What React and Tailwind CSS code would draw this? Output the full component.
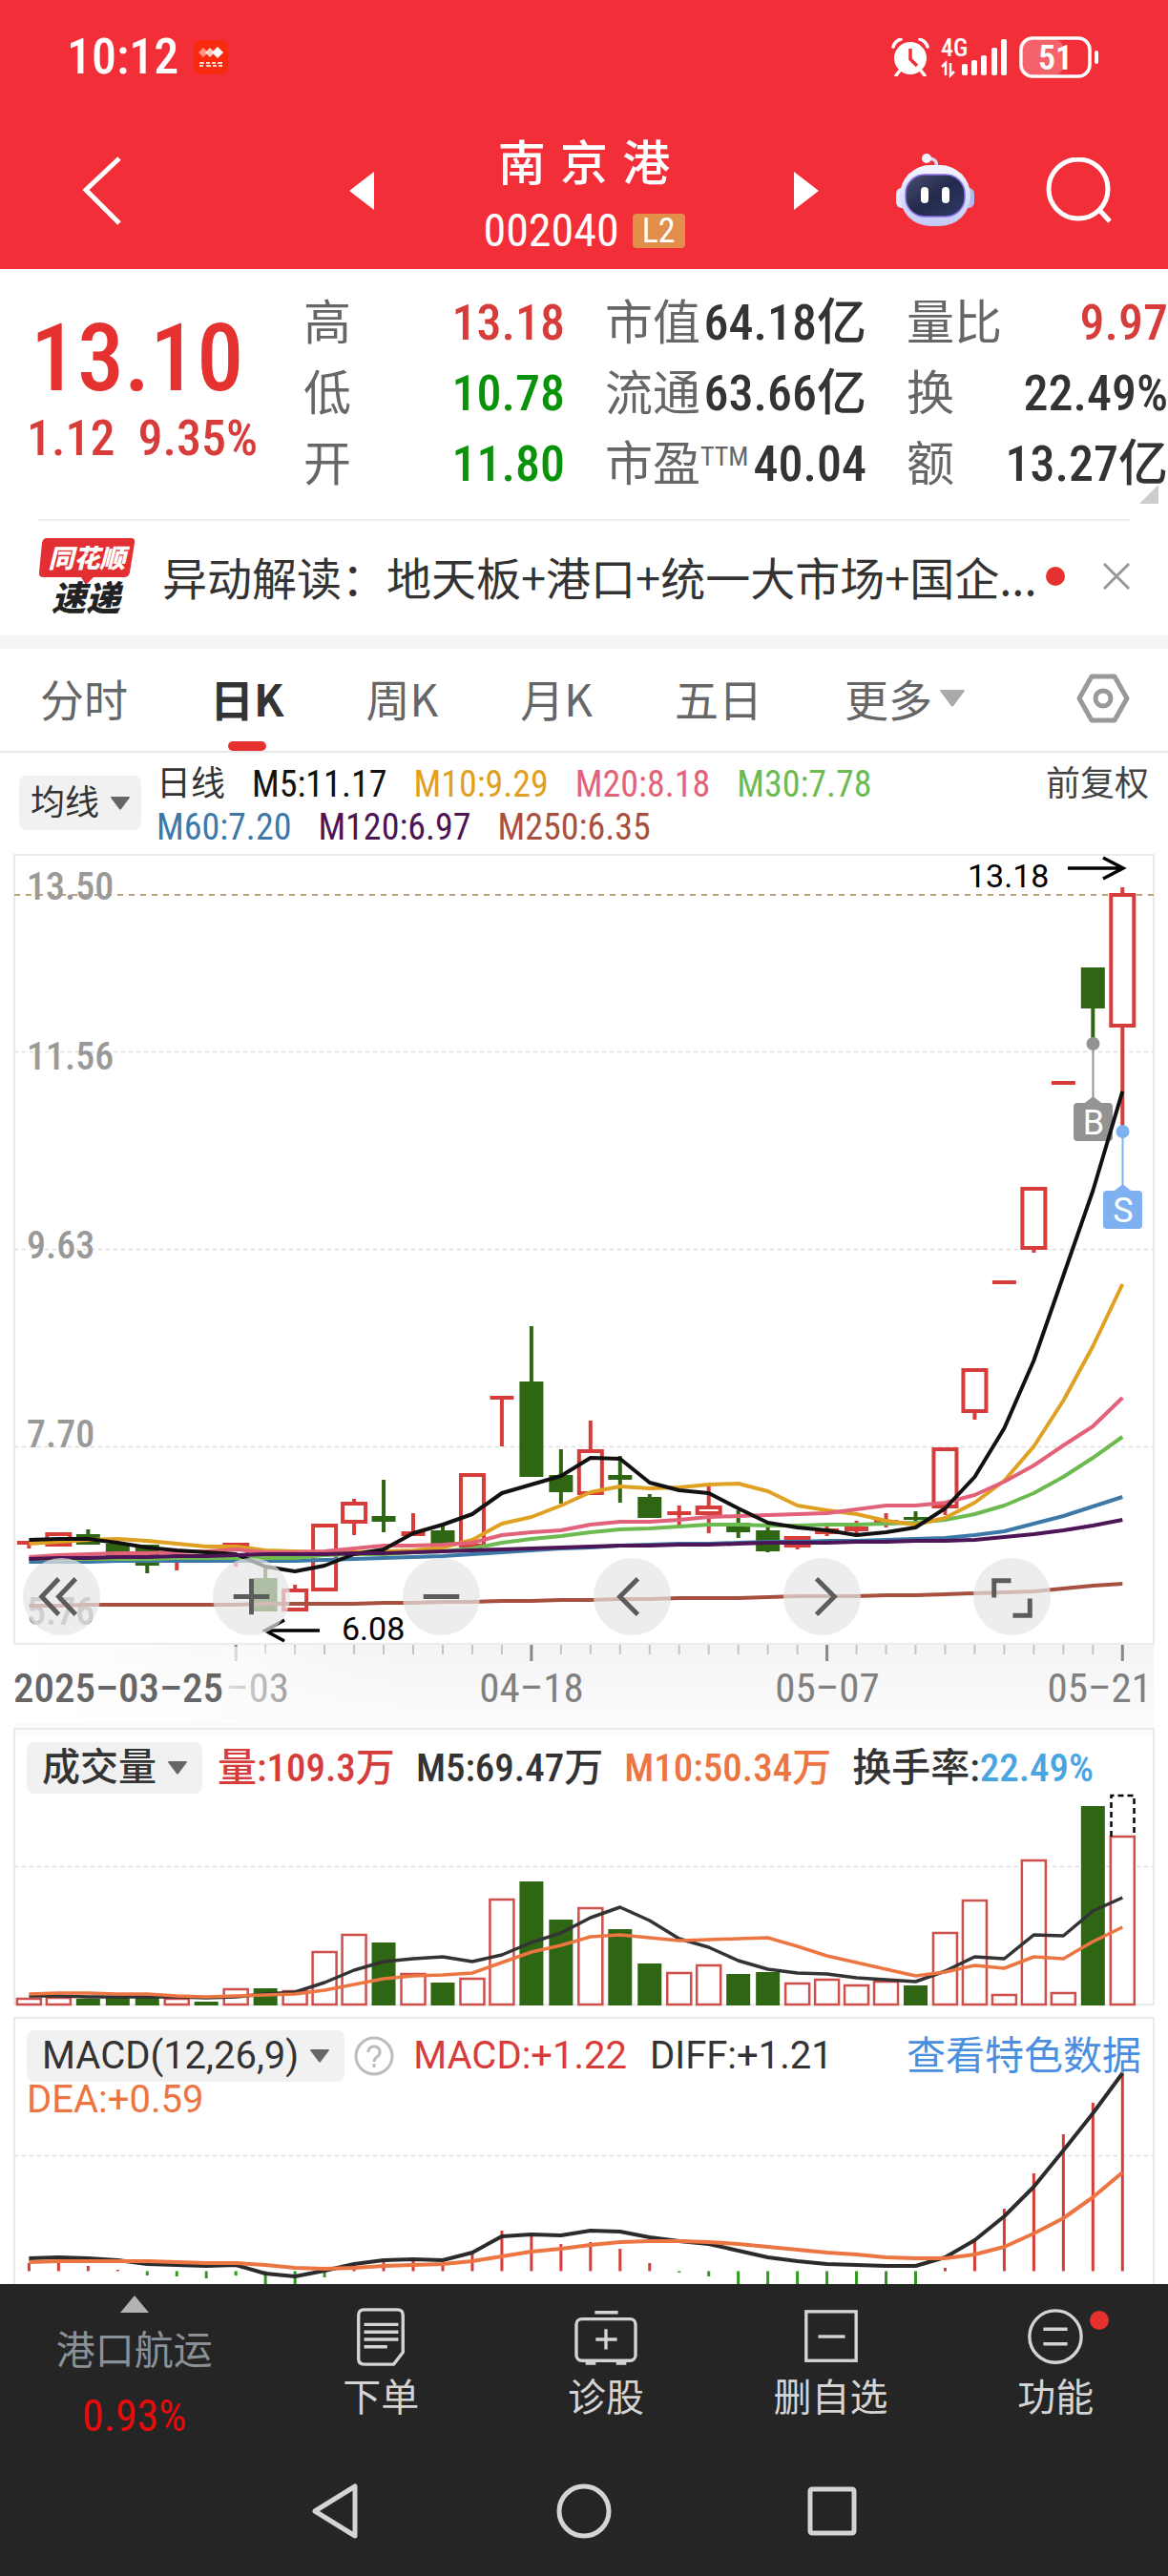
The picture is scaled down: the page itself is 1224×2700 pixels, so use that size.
import React, { useState } from 'react';

const RED = '#d63c3a';
const GREEN = '#2f6613';

// horizontal position of day i (38 trading days)
const dayX = (i) => 30.4 + i * 30.97;

// [direction, top of body, bottom of body, high, low]
const candles = [
    ['doji', 1615, 1619, 1615, 1623],
    ['up', 1606, 1621, 1606, 1621],
    ['down', 1608, 1619, 1603, 1619],
    ['down', 1618, 1632, 1618, 1635],
    ['down', 1619, 1641, 1619, 1649],
    ['doji', 1631, 1634, 1628, 1646],
    ['down', 1633, 1636, 1630, 1637],
    ['up', 1617, 1634, 1617, 1642],
    ['down', 1654, 1689, 1640, 1689],
    ['up', 1665, 1689, 1661, 1689],
    ['up', 1597, 1668, 1597, 1668],
    ['up', 1574, 1597, 1571, 1609],
    ['down', 1589, 1595, 1551, 1606],
    ['doji', 1605, 1610, 1586, 1610],
    ['down', 1604, 1618, 1599, 1618],
    ['up', 1544, 1622, 1544, 1622],
    ['doji', 1463, 1467, 1463, 1516],
    ['down', 1448, 1548, 1390, 1548],
    ['down', 1546, 1564, 1519, 1576],
    ['up', 1519, 1567, 1489, 1567],
    ['down', 1546, 1551, 1526, 1575],
    ['down', 1569, 1591, 1566, 1591],
    ['doji', 1584, 1588, 1578, 1599],
    ['up', 1578, 1588, 1557, 1607],
    ['down', 1596, 1606, 1583, 1612],
    ['down', 1604, 1626, 1600, 1627],
    ['up', 1610, 1622, 1610, 1624],
    ['doji', 1602, 1608, 1600, 1610],
    ['doji', 1600, 1605, 1594, 1611],
    ['doji', 1593, 1596, 1586, 1601],
    ['down', 1590, 1593, 1584, 1597],
    ['up', 1517, 1581, 1517, 1588],
    ['up', 1434, 1481, 1434, 1488],
    ['doji', 1342, 1346, 1342, 1346],
    ['up', 1244, 1310, 1244, 1313],
    ['doji', 1133, 1137, 1133, 1137],
    ['down', 1014, 1057, 1014, 1094],
    ['up', 936, 1077, 930, 1186],
];

const dayTicks = candles.map((_, i) => i).filter((i) => i >= 7);

const averages = [
    { color: '#a8503f', data: [1683, 1683, 1682, 1682, 1682, 1682, 1682, 1682, 1681, 1681, 1681, 1681, 1680, 1680, 1679, 1679, 1678, 1678, 1677, 1677, 1676, 1676, 1675, 1675, 1675, 1674, 1673, 1673, 1673, 1672, 1672, 1671, 1670, 1669, 1668, 1665, 1662, 1660] },
    { color: '#3c78a8', data: [1637, 1637, 1637, 1636, 1636, 1636, 1636, 1636, 1636, 1636, 1635, 1634, 1633, 1632, 1631, 1629, 1627, 1625, 1623, 1622, 1620, 1619, 1618, 1618, 1617, 1616, 1616, 1615, 1615, 1614, 1613, 1612, 1609, 1605, 1597, 1589, 1579, 1569] },
    { color: '#6dbb50', data: [1634, 1634, 1634, 1634, 1634, 1633, 1633, 1633, 1633, 1633, 1630, 1629, 1629, 1627, 1626, 1623, 1617, 1613, 1610, 1606, 1603, 1602, 1600, 1598, 1598, 1599, 1599, 1598, 1598, 1597, 1596, 1593, 1587, 1578, 1565, 1548, 1528, 1506] },
    { color: '#e0a022', data: [1618, 1616, 1614, 1613, 1615, 1618, 1621, 1621, 1625, 1626, 1627, 1627, 1626, 1625, 1622, 1614, 1597, 1590, 1578, 1564, 1558, 1560, 1559, 1556, 1555, 1563, 1578, 1583, 1587, 1594, 1598, 1591, 1575, 1552, 1516, 1468, 1411, 1346] },
    { color: '#e2627a', data: [1632, 1630, 1629, 1628, 1628, 1627, 1626, 1624, 1627, 1627, 1626, 1623, 1620, 1620, 1619, 1617, 1609, 1606, 1604, 1598, 1595, 1595, 1593, 1590, 1589, 1588, 1587, 1586, 1582, 1578, 1578, 1575, 1567, 1553, 1536, 1515, 1495, 1465] },
    { color: '#111111', data: [1614, 1613, 1613, 1617, 1622, 1625, 1627, 1629, 1642, 1647, 1641, 1629, 1624, 1607, 1598, 1587, 1565, 1556, 1547, 1528, 1529, 1554, 1562, 1565, 1581, 1596, 1601, 1604, 1609, 1606, 1601, 1581, 1548, 1497, 1426, 1337, 1248, 1144] },
    { color: '#4c1656', data: [1634, 1633, 1633, 1632, 1632, 1631, 1631, 1630, 1629, 1629, 1629, 1628, 1628, 1627, 1626, 1625, 1624, 1623, 1622, 1621, 1620, 1620, 1619, 1619, 1618, 1617, 1617, 1617, 1616, 1616, 1615, 1615, 1614, 1611, 1608, 1604, 1599, 1593] },
];

const volumeTops = [2095, 2094, 2095, 2094, 2094, 2095, 2098, 2085, 2084, 2087, 2046, 2028, 2036, 2069, 2078, 2074, 1991, 1972, 2012, 2000, 2022, 2058, 2068, 2060, 2069, 2067, 2079, 2075, 2081, 2077, 2081, 2026, 1992, 2091, 1950, 2089, 1893, 1925];
const volumeM5 = [2092, 2092, 2093, 2093, 2093, 2093, 2094, 2093, 2090, 2088, 2078, 2065, 2056, 2053, 2051, 2056, 2049, 2036, 2026, 2010, 1999, 2013, 2032, 2041, 2055, 2064, 2068, 2069, 2073, 2075, 2077, 2066, 2051, 2053, 2028, 2029, 2003, 1989];
const volumeM10 = [2090, 2089, 2089, 2090, 2090, 2092, 2093, 2092, 2091, 2090, 2086, 2080, 2074, 2071, 2070, 2068, 2057, 2046, 2039, 2030, 2028, 2031, 2034, 2033, 2032, 2031, 2040, 2050, 2057, 2064, 2071, 2067, 2060, 2063, 2051, 2053, 2035, 2020];

const macdBars = [2372, 2372, 2375, 2379, 2385, 2386, 2388, 2385, 2400, 2400, 2387, 2374, 2370, 2369, 2373, 2362, 2338, 2344, 2352, 2350, 2357, 2372, 2382, 2386, 2400, 2400, 2400, 2400, 2400, 2400, 2400, 2377, 2349, 2315, 2278, 2237, 2204, 2173];
const macdDiff = [2367, 2366, 2367, 2369, 2373, 2374, 2375, 2374, 2383, 2386, 2380, 2373, 2369, 2368, 2369, 2361, 2344, 2342, 2343, 2338, 2339, 2345, 2349, 2352, 2359, 2366, 2370, 2373, 2374, 2375, 2375, 2366, 2348, 2323, 2292, 2254, 2215, 2173];
const macdDea = [2371, 2370, 2370, 2370, 2370, 2371, 2372, 2372, 2374, 2377, 2378, 2377, 2375, 2374, 2373, 2370, 2365, 2360, 2357, 2353, 2350, 2349, 2349, 2350, 2352, 2355, 2358, 2361, 2363, 2366, 2367, 2367, 2363, 2355, 2341, 2325, 2303, 2277];

const legend = [
    { text: 'M5:11.17', className: 'text-[#111111]' },
    { text: 'M10:9.29', className: 'text-[#e0a022]' },
    { text: 'M20:8.18', className: 'text-[#e2627a]' },
    { text: 'M30:7.78', className: 'text-[#6dbb50]' },
    { text: 'M60:7.20', className: 'text-[#3c78a8]' },
    { text: 'M120:6.97', className: 'text-[#4c1656]' },
    { text: 'M250:6.35', className: 'text-[#a8503f]' },
];

const quotes = [
    [
        { label: '高', value: '13.18', className: 'text-[#d63c3a]' },
        { label: '低', value: '10.78', className: 'text-[#0a930a]' },
        { label: '开', value: '11.80', className: 'text-[#0a930a]' },
    ],
    [
        { label: '市值', value: '64.18亿', className: 'text-[#333333]' },
        { label: '流通', value: '63.66亿', className: 'text-[#333333]' },
        { label: '市盈', sup: 'TTM', value: '40.04', className: 'text-[#333333]' },
    ],
    [
        { label: '量比', value: '9.97', className: 'text-[#d63c3a]' },
        { label: '换', value: '22.49%', className: 'text-[#333333]' },
        { label: '额', value: '13.27亿', className: 'text-[#333333]' },
    ],
];

const Line = ({ data, color, width = 4 }) => (
    <polyline
        points={data.map((y, i) => `${dayX(i)},${y}`).join(' ')}
        fill="none"
        stroke={color}
        strokeWidth={width}
        strokeLinejoin="round"
    />
);

const Grid = ({ y }) => (
    <line x1="15" x2="1209" y1={y} y2={y} stroke="#dedede" strokeWidth="1.5" strokeDasharray="4 4" />
);

const Candle = ({ x, candle }) => {
    const [kind, top, bottom, high, low] = candle;
    const color = kind === 'down' ? GREEN : RED;
    return (
        <g stroke={color} strokeWidth="4">
            {high < top && <line x1={x} x2={x} y1={high} y2={top} />}
            {low > bottom && <line x1={x} x2={x} y1={bottom} y2={low} />}
            {kind === 'up' ? (
                <rect x={x - 12} y={top + 2} width="24" height={bottom - top - 4} fill="none" />
            ) : (
                <rect x={x - 12.5} y={top} width="25" height={bottom - top} fill={color} stroke="none" />
            )}
        </g>
    );
};

const Caret = ({ className }) => (
    <svg className={className} viewBox="0 0 20 14" aria-hidden="true">
        <path d="M1 0h18q1.500 0 .6 1.500L11 13q-1 1.200-2 0L.4 1.500Q-.5 0 1 0z" fill="currentColor" />
    </svg>
);

const Dropdown = ({ id, label, value, className }) => (
    <label htmlFor={id} className={`flex shrink-0 items-center rounded-lg bg-[#f1f1f1] text-[#333333] ${className}`}>
        <select id={id} aria-label={label} defaultValue={value} className="field-sizing-content appearance-none bg-transparent outline-none">
            <option value={value}>{value}</option>
        </select>
        <Caret className="h-[14px] w-5 text-[#666666]" />
    </label>
);

const StatusBar = () => (
    <div className="flex items-center py-9 pl-[70px] pr-[72px] text-white">
        <span className="text-[52px] leading-[48px] font-medium">10:12</span>
        <svg className="ml-4 size-9" viewBox="0 0 36 36" aria-hidden="true">
            <rect width="36" height="36" rx="7" fill="#f92b0e" />
            <path d="M5 13l5-5 5 5-5 5z" fill="#fff" fillOpacity=".5" />
            <path d="M12 13l5-5 5 5-5 5z" fill="#fff" fillOpacity=".75" />
            <path d="M19 13l6-6 6 6-6 6z" fill="#fff" />
            <path d="M6 24h5m2 0h4m2 0h4m2 0h5M6 27h4m3 0h5m2 0h4m2 0h4" stroke="#fff" strokeWidth="2" strokeOpacity=".8" />
        </svg>
        <div className="ml-auto flex items-center">
            <svg className="h-10 w-10" viewBox="0 0 40 40" aria-hidden="true">
                <circle cx="20" cy="21" r="17" fill="#fff" />
                <path d="M2 9q2-6 8-8M38 9q-2-6-8-8M9 34l-4 5M31 34l4 5" stroke="#fff" strokeWidth="3.500" fill="none" strokeLinecap="round" />
                <path d="M20 11v11l7 7" stroke="#f22f38" strokeWidth="3.500" fill="none" />
            </svg>
            <svg className="ml-3 h-12 w-[72px]" viewBox="0 -4 72 48" aria-hidden="true">
                <text x="0" y="19" fontSize="26" fontWeight="500" fill="#fff">4G</text>
                <path d="M1 30l4-4v13M10 26v13l4-4" stroke="#fff" strokeWidth="2.500" fill="none" />
                <g fill="#fff">
                    <rect x="22" y="27" width="6" height="12" rx="2" />
                    <rect x="32" y="23" width="6" height="16" rx="2" />
                    <rect x="42" y="18" width="6" height="21" rx="2" />
                    <rect x="53" y="10" width="6" height="29" rx="2" />
                    <rect x="63" y="1" width="6" height="38" rx="2" />
                </g>
            </svg>
            <svg className="ml-2.5 h-11 w-[84px]" viewBox="0 0 84 44" aria-hidden="true">
                <rect x="4" y="4" width="42" height="36" rx="8" fill="#fff" fillOpacity=".25" />
                <rect x="2" y="2" width="72" height="40" rx="12" fill="none" stroke="#fff" strokeWidth="3.500" />
                <rect x="79" y="15" width="4" height="14" rx="2" fill="#fff" />
                <text x="38" y="35" fontSize="36" fontWeight="600" fill="#fff" textAnchor="middle">51</text>
            </svg>
        </div>
    </div>
);

const Robot = () => (
    <svg className="h-20 w-[84px]" viewBox="0 0 84 80" aria-hidden="true">
        <defs>
            <linearGradient id="shell" x1="0" y1="0" x2="0" y2="1">
                <stop offset="0" stopColor="#f4f6ff" />
                <stop offset="1" stopColor="#c3c9f6" />
            </linearGradient>
            <linearGradient id="face" x1="0" y1="0" x2="1" y2="1">
                <stop offset="0" stopColor="#4a4f70" />
                <stop offset=".5" stopColor="#232a4c" />
                <stop offset="1" stopColor="#303a66" />
            </linearGradient>
        </defs>
        <path d="M43 15q2-8-7-9" stroke="#d5d9fa" strokeWidth="3.500" fill="none" />
        <circle cx="33" cy="6" r="5" fill="#f1f3ff" />
        <rect x="1" y="37" width="14" height="21" rx="6" fill="#e3e6fc" />
        <rect x="69" y="37" width="14" height="21" rx="6" fill="#b4b9ee" />
        <rect x="5" y="13" width="74" height="64" rx="32" fill="url(#shell)" />
        <rect x="11" y="23" width="62" height="44" rx="20" fill="url(#face)" stroke="#8b6fe8" strokeWidth="1.500" />
        <rect x="27" y="36" width="8" height="17" rx="4" fill="#fff" />
        <rect x="49" y="36" width="8" height="17" rx="4" fill="#fff" />
    </svg>
);

const StockHeader = () => (
    <header className="bg-[#f22f38] text-white">
        <StatusBar />
        <div className="grid grid-cols-[1fr_492px_1fr] items-center pt-5 pb-[22px]">
            <div className="pl-[84px]">
                <button type="button" aria-label="返回" className="block">
                    <svg className="h-[74px] w-11" viewBox="0 0 44 74" fill="none" stroke="currentColor" strokeWidth="5" aria-hidden="true">
                        <path d="M41 3L6 36l35 35" />
                    </svg>
                </button>
            </div>
            <div className="flex items-center justify-between">
                <button type="button" aria-label="上一只">
                    <svg className="h-10 w-[26px]" viewBox="0 0 26 40" aria-hidden="true">
                        <path d="M26 0v40L0 20z" fill="currentColor" />
                    </svg>
                </button>
                <div className="flex flex-col items-center">
                    <h1 className="pt-1 text-[50px] leading-[56px] font-medium">{'南\u2004京\u2004港'}</h1>
                    <p className="mt-6 flex items-center gap-[14px] text-[48px] leading-9">
                        002040
                        <span className="rounded-sm bg-[#e28f4b] px-2.5 text-[36px]">L2</span>
                    </p>
                </div>
                <button type="button" aria-label="下一只">
                    <svg className="h-10 w-[26px]" viewBox="0 0 26 40" aria-hidden="true">
                        <path d="M0 0v40l26-20z" fill="currentColor" />
                    </svg>
                </button>
            </div>
            <div className="flex items-center justify-end gap-[74px] pr-[58px]">
                <button type="button" aria-label="智能助手"><Robot /></button>
                <button type="button" aria-label="搜索">
                    <svg className="size-[70px]" viewBox="0 0 70 70" fill="none" stroke="currentColor" strokeWidth="5" aria-hidden="true">
                        <circle cx="34" cy="33" r="31" />
                        <path d="M56 55l11 12" />
                    </svg>
                </button>
            </div>
        </div>
    </header>
);

const Quote = () => (
    <section className="relative flex pt-5 pb-5">
        <div className="w-[318px] shrink-0 pt-6 text-[#e53130]">
            <p className="pl-8 text-[98px] leading-[100px] font-medium">13.10</p>
            <p className="mt-2 flex gap-6 pl-7 text-[52px] leading-[52px] font-medium text-[#d63c3a]">
                <span>1.12</span>
                <span>9.35%</span>
            </p>
        </div>
        <div className="grid flex-1 grid-cols-3 gap-[42px]">
            {quotes.map((column) => (
                <dl key={column[0].label}>
                    {column.map((row) => (
                        <div key={row.label} className="flex items-center justify-between leading-[74px] whitespace-nowrap">
                            <dt className="flex text-[50px] text-[#666666]">
                                {row.label}
                                {row.sup && <sup className="top-0 text-[28px] leading-[58px]">{row.sup}</sup>}
                            </dt>
                            <dd className={`text-[52px] font-medium ${row.className}`}>{row.value}</dd>
                        </div>
                    ))}
                </dl>
            ))}
        </div>
        <svg className="absolute right-2.5 bottom-4 size-5" viewBox="0 0 20 20" aria-hidden="true">
            <path d="M20 0v20H0z" fill="#cccccc" />
        </svg>
    </section>
);

const News = () => (
    <section className="mx-10 flex items-center border-t-2 border-[#ededed] pt-2.5 pb-[14px]">
        <svg className="h-24 w-[102px] shrink-0" viewBox="0 -8 102 96" aria-hidden="true">
            <path d="M9 0h88q5 0 4 5l-5 31q-1 5-6 5H58l-8 8-5-8H6q-6 0-5-5L4 5q1-5 5-5z" fill="#e22f33" />
            <g fontWeight="900" fontStyle="italic" textAnchor="middle">
                <text x="51" y="31" fontSize="27" fill="#fff">同花顺</text>
                <text x="50" y="76" fontSize="36" fill="#222">速递</text>
            </g>
        </svg>
        <a href="#news" className="ml-7 font-['Noto_Sans_CJK_SC',sans-serif] text-[47px] leading-[80px] whitespace-nowrap text-[#333333]">
            异动解读：地天板+港口+统一大市场+国企...
        </a>
        <span className="ml-2.5 size-5 shrink-0 rounded-full bg-[#e53130]" />
        <button type="button" aria-label="关闭" className="ml-auto">
            <svg className="size-7" viewBox="0 0 28 28" stroke="#999999" strokeWidth="3" aria-hidden="true">
                <path d="M1 1l26 26M27 1L1 27" />
            </svg>
        </button>
    </section>
);

const Tabs = () => {
    const [active, setActive] = useState('日K');

    return (
        <nav className="flex items-center gap-[86px] border-b-2 border-[#e8e8e8] pr-10 pb-1 pl-[42px] font-['Noto_Sans_CJK_SC',sans-serif] text-[46px] leading-[103px] text-[#666666]">
            {['分时', '日K', '周K', '月K', '五日'].map((tab) => (
                <button
                    key={tab}
                    type="button"
                    onClick={() => setActive(tab)}
                    className={`relative ${active === tab ? 'font-bold text-[#333333]' : ''}`}
                >
                    {tab}
                    {active === tab && (
                        <span className="absolute inset-x-0 -bottom-1 mx-auto h-2.5 w-10 rounded-full bg-[#e53130]" />
                    )}
                </button>
            ))}
            <button type="button" className="flex items-center gap-2">
                更多
                <Caret className="h-5 w-[26px] text-[#aaaaaa]" />
            </button>
            <button type="button" aria-label="设置" className="ml-auto">
                <svg className="h-[52px] w-14" viewBox="0 0 56 52" fill="none" stroke="#999999" strokeWidth="5" strokeLinejoin="round" aria-hidden="true">
                    <path d="M16 3h24l13 23-13 23H16L3 26z" />
                    <circle cx="28" cy="26" r="8" />
                </svg>
            </button>
        </nav>
    );
};

const Legend = () => (
    <div className="flex items-start px-5 pt-[11px]">
        <Dropdown id="indicator" label="主图指标" value="均线" className="mt-[13px] h-[57px] gap-3 px-3 text-[36px]" />
        <ul className="ml-4 flex flex-1 flex-wrap gap-x-7 pr-20 text-[38px] leading-[45px]">
            <li className="text-[36px] text-[#333333]">日线</li>
            {legend.map((item) => (
                <li key={item.text} className={item.className}>{item.text}</li>
            ))}
        </ul>
        <button type="button" className="text-[36px] leading-[45px] text-[#444444]">前复权</button>
    </div>
);

const chartButtons = [
    { label: '最早', path: 'M38 22L20 41l18 19M56 22L38 41l18 19' },
    { label: '放大', path: 'M22 41h38M41 22v38' },
    { label: '缩小', path: 'M22 41h38' },
    { label: '左移', path: 'M47 22L28 41l19 19' },
    { label: '右移', path: 'M35 22l19 19-19 19' },
    { label: '全屏', path: 'M22 42V24h18M60 43v18H42' },
];

const priceLabels = [
    { y: 943, text: '13.50' },
    { y: 1121, text: '11.56' },
    { y: 1319, text: '9.63' },
    { y: 1517, text: '7.70' },
    { y: 1703, text: '5.76' },
];

const PriceChart = () => (
    <section className="relative">
        <svg className="w-full" viewBox="0 890 1224 916" role="img" aria-label="日K线图">
            <defs>
                <linearGradient id="axisShade" x1="0" y1="0" x2="1" y2="0">
                    <stop offset="0" stopColor="#f4f4f4" stopOpacity="0" />
                    <stop offset=".35" stopColor="#f4f4f4" />
                </linearGradient>
                <linearGradient id="axisFade" x1="0" y1="0" x2="1" y2="0">
                    <stop offset="0" stopColor="#fbfbfb" stopOpacity=".8" />
                    <stop offset="1" stopColor="#fbfbfb" stopOpacity="0" />
                </linearGradient>
                <linearGradient id="axisDown" x1="0" y1="0" x2="0" y2="1">
                    <stop offset="0" stopColor="#fff" stopOpacity="0" />
                    <stop offset="1" stopColor="#fff" stopOpacity=".7" />
                </linearGradient>
            </defs>
            <rect x="15" y="1724" width="1194" height="82" fill="url(#axisShade)" />
            <rect x="15" y="1724" width="1194" height="82" fill="url(#axisDown)" />
            <rect x="15" y="896" width="1194" height="827" fill="none" stroke="#ebebeb" strokeWidth="2" />
            <Grid y={1102.5} />
            <Grid y={1309.5} />
            <Grid y={1516.5} />
            <line x1="15" x2="1209" y1="938" y2="938" stroke="#b8a47a" strokeWidth="2" strokeDasharray="6 6" />
            <g fontSize="40" fontWeight="500" fill="#999999">
                {priceLabels.map((label) => (
                    <text key={label.text} x="28" y={label.y}>{label.text}</text>
                ))}
            </g>

            {candles.map((candle, i) => <Candle key={i} x={dayX(i)} candle={candle} />)}

            {/* trade markers */}
            <g fill="#939393">
                <circle cx="1145.500" cy="1094" r="7" />
                <path d="M1144.500 1094h2v56l9 7h-20l9-7z" />
                <rect x="1125" y="1156" width="41" height="40" rx="4" />
            </g>
            <g fill="#7fb1f0">
                <circle cx="1176.500" cy="1186" r="7" />
                <path d="M1175.500 1186h2v56l9 7h-20l9-7z" />
                <rect x="1156" y="1248" width="41" height="40" rx="4" />
            </g>
            <g fontFamily="Roboto, sans-serif" fontSize="36" fill="#fff" textAnchor="middle">
                <text x="1146" y="1189">B</text>
                <text x="1177" y="1281">S</text>
            </g>

            {averages.map((line) => <Line key={line.color} data={line.data} color={line.color} width={4} />)}

            <g fill="none" stroke="#000" strokeWidth="3.500">
                <path d="M1119 910h57M1156 899l21 11-21 11" />
                <path d="M335 1709h-56M298 1698l-20 11 20 11" />
            </g>
            <g fontFamily="Roboto, sans-serif" fontSize="34">
                <text x="1014" y="930">13.18</text>
                <text x="358" y="1719">6.08</text>
            </g>

            {/* time axis */}
            {dayTicks.map((i) => (
                <line
                    key={i}
                    x1={dayX(i)}
                    x2={dayX(i)}
                    y1="1724"
                    y2={i % 10 === 7 ? 1741 : 1734}
                    stroke={i % 10 === 7 ? '#888888' : '#c4c4c4'}
                    strokeWidth={i % 10 === 7 ? 3 : 2}
                />
            ))}
            <g fontSize="43" fill="#808080" textAnchor="middle">
                <text x="236" y="1784" textAnchor="start">–03</text>
                <rect x="234" y="1726" width="100" height="76" fill="url(#axisFade)" />
                <text x="557" y="1784">04–18</text>
                <text x="867" y="1784">05–07</text>
                <text x="1207" y="1784" textAnchor="end">05–21</text>
                <text x="14" y="1784" fontWeight="500" fill="#666666" textAnchor="start">2025–03–25</text>
            </g>
        </svg>
        <div className="absolute right-[123px] bottom-[92px] left-6 flex justify-between">
            {chartButtons.map((button) => (
                <button key={button.label} type="button" aria-label={button.label} className="size-[81px] rounded-full bg-[#e5e5e5]/70">
                    <svg viewBox="0 0 82 82" fill="none" stroke="#5c5c5c" strokeWidth="5" aria-hidden="true">
                        <path d={button.path} />
                    </svg>
                </button>
            ))}
        </div>
    </section>
);

const VolumeChart = () => (
    <section className="grid">
        <svg className="col-start-1 row-start-1 w-full" viewBox="0 1806 1224 300" role="img" aria-label="成交量图">
            <rect x="15" y="1805" width="1194" height="14" fill="#fafafa" />
            <rect x="15" y="1812" width="1194" height="289" fill="none" stroke="#ebebeb" strokeWidth="2" />
            <Grid y={1956.5} />
            {volumeTops.map((top, i) =>
                candles[i][0] === 'down' ? (
                    <rect key={i} x={dayX(i) - 12.5} y={top} width="25" height={2102 - top} fill={GREEN} />
                ) : (
                    <rect key={i} x={dayX(i) - 12.5} y={top} width="25" height={2101 - top} fill="#fff" stroke="#cf4f4d" strokeWidth="2.5" />
                )
            )}
            <path d="M1164.500 1925v-43h24v43" fill="none" stroke="#000" strokeWidth="2.500" strokeDasharray="6 4" />
            <Line data={volumeM5} color="#333333" width={3.5} />
            <Line data={volumeM10} color="#ec7542" width={3.5} />
        </svg>
        <div className="col-start-1 row-start-1 flex items-center gap-[22px] self-start pt-5 pl-7 text-[41px] leading-[54px] font-medium whitespace-nowrap">
            <Dropdown id="volume" label="副图指标一" value="成交量" className="-mr-1.5 h-[54px] gap-3 px-4 text-[40px]" />
            <span className="text-[#d63c3a]">量:109.3万</span>
            <span className="text-[#333333]">M5:69.47万</span>
            <span className="text-[#ec7542]">M10:50.34万</span>
            <span className="text-[#333333]">换手率:<span className="text-[#49a5e2]">22.49%</span></span>
        </div>
    </section>
);

const MacdChart = () => (
    <section className="grid">
        <svg className="col-start-1 row-start-1 w-full" viewBox="0 2106 1224 288" role="img" aria-label="MACD图">
            <path d="M15 2394V2115h1194v279" fill="none" stroke="#ebebeb" strokeWidth="2" />
            <Grid y={2259.5} />
            {macdBars.map((y, i) => (
                <line key={i} x1={dayX(i)} x2={dayX(i)} y1="2380.5" y2={y} stroke={y > 2380 ? '#2f9a1e' : RED} strokeWidth="3" />
            ))}
            <Line data={macdDiff} color="#2b2b2b" />
            <Line data={macdDea} color="#ec7542" />
        </svg>
        <div className="col-start-1 row-start-1 self-start px-7 pt-[22px] font-['Roboto','Noto_Sans_CJK_SC',sans-serif] text-[40px] whitespace-nowrap">
            <div className="flex items-center leading-[54px]">
                <Dropdown id="macd" label="副图指标二" value="MACD(12,26,9)" className="h-[54px] gap-3 px-4" />
                <button type="button" aria-label="指标说明" className="ml-2.5">
                    <svg className="size-[42px]" viewBox="0 0 42 42" fill="none" stroke="#bdbdbd" strokeWidth="3" aria-hidden="true">
                        <circle cx="21" cy="21" r="19" />
                        <path d="M15 17q0-6 6-6t6 6q0 3-3 5t-3 5M21 29v4" />
                    </svg>
                </button>
                <span className="ml-5 text-[#d63c3a]">MACD:+1.22</span>
                <span className="ml-6 text-[#333333]">DIFF:+1.21</span>
                <a href="#data" className="ml-auto text-[41px] text-[#4a8fdf]">查看特色数据</a>
            </div>
            <p className="leading-[38px] text-[#ec7542]">DEA:+0.59</p>
        </div>
    </section>
);

const actions = [
    {
        label: '下单',
        icon: (
            <>
                <path d="M12 3h36q6 0 6 6v40L44 62H12q-6 0-6-6V9q0-6 6-6z" />
                <path d="M12 19h37M12 27h37M12 35h37M12 43h25" />
            </>
        ),
    },
    {
        label: '诊股',
        icon: (
            <>
                <rect x="-2" y="13" width="64" height="45" rx="6" />
                <path d="M18 6h25M30 24v22M19 35h23M8 61h11M41 61h11" />
            </>
        ),
    },
    {
        label: '删自选',
        icon: (
            <>
                <rect x="3" y="5" width="54" height="53" />
                <path d="M16 32h29" />
            </>
        ),
    },
    {
        label: '功能',
        dot: true,
        icon: (
            <>
                <circle cx="30" cy="32" r="28" />
                <path d="M17 24h26M17 40h26" />
            </>
        ),
    },
];

const BottomBar = () => (
    <footer className="bg-[#252525] text-[#d4d4d4]">
        <div className="flex items-start pt-3">
            <a href="#sector" className="flex w-[23%] flex-col items-center text-[41px] leading-[56px]">
                <svg className="h-[18px] w-[30px]" viewBox="0 0 30 18" aria-hidden="true">
                    <path d="M15 0l15 18H0z" fill="#b2b2b2" />
                </svg>
                <span className="mt-3 text-[#8a9196]">港口航运</span>
                <span className="mt-3 text-[46px] text-[#e60c0c]">0.93%</span>
            </a>
            {actions.map((action) => (
                <button key={action.label} type="button" className="relative flex flex-1 flex-col items-center pt-3 text-[40px] leading-[56px]">
                    <svg className="h-16 w-[68px]" viewBox="-4 0 68 66" fill="none" stroke="currentColor" strokeWidth="3.500" aria-hidden="true">
                        {action.icon}
                    </svg>
                    <span className="mt-1">{action.label}</span>
                    {action.dot && <span className="absolute top-4 left-1/2 ml-9 size-5 rounded-full bg-[#e53130]" />}
                </button>
            ))}
        </div>
        <div className="flex justify-center gap-[200px] pt-[42px] pb-[38px]">
            <button type="button" aria-label="系统返回">
                <svg className="size-[60px]" viewBox="0 0 60 60" fill="none" stroke="currentColor" strokeWidth="5" strokeLinejoin="round" aria-hidden="true">
                    <path d="M50 4v52L8 30z" />
                </svg>
            </button>
            <button type="button" aria-label="主屏幕">
                <svg className="size-[60px]" viewBox="0 0 60 60" fill="none" stroke="currentColor" strokeWidth="5" aria-hidden="true">
                    <circle cx="30" cy="30" r="26" />
                </svg>
            </button>
            <button type="button" aria-label="最近任务">
                <svg className="size-[60px]" viewBox="0 0 60 60" fill="none" stroke="currentColor" strokeWidth="5" aria-hidden="true">
                    <rect x="7" y="7" width="46" height="46" rx="2" />
                </svg>
            </button>
        </div>
    </footer>
);

const App = () => {
    return (
        <div className="min-h-screen bg-white font-['Roboto_Condensed','Roboto','Noto_Sans_CJK_SC',sans-serif]">
            <StockHeader />
            <main>
                <Quote />
                <News />
                <div className="h-3.5 bg-[#f4f4f4]" />
                <Tabs />
                <Legend />
                <PriceChart />
                <VolumeChart />
                <MacdChart />
            </main>
            <BottomBar />
        </div>
    );
};

export default App;
